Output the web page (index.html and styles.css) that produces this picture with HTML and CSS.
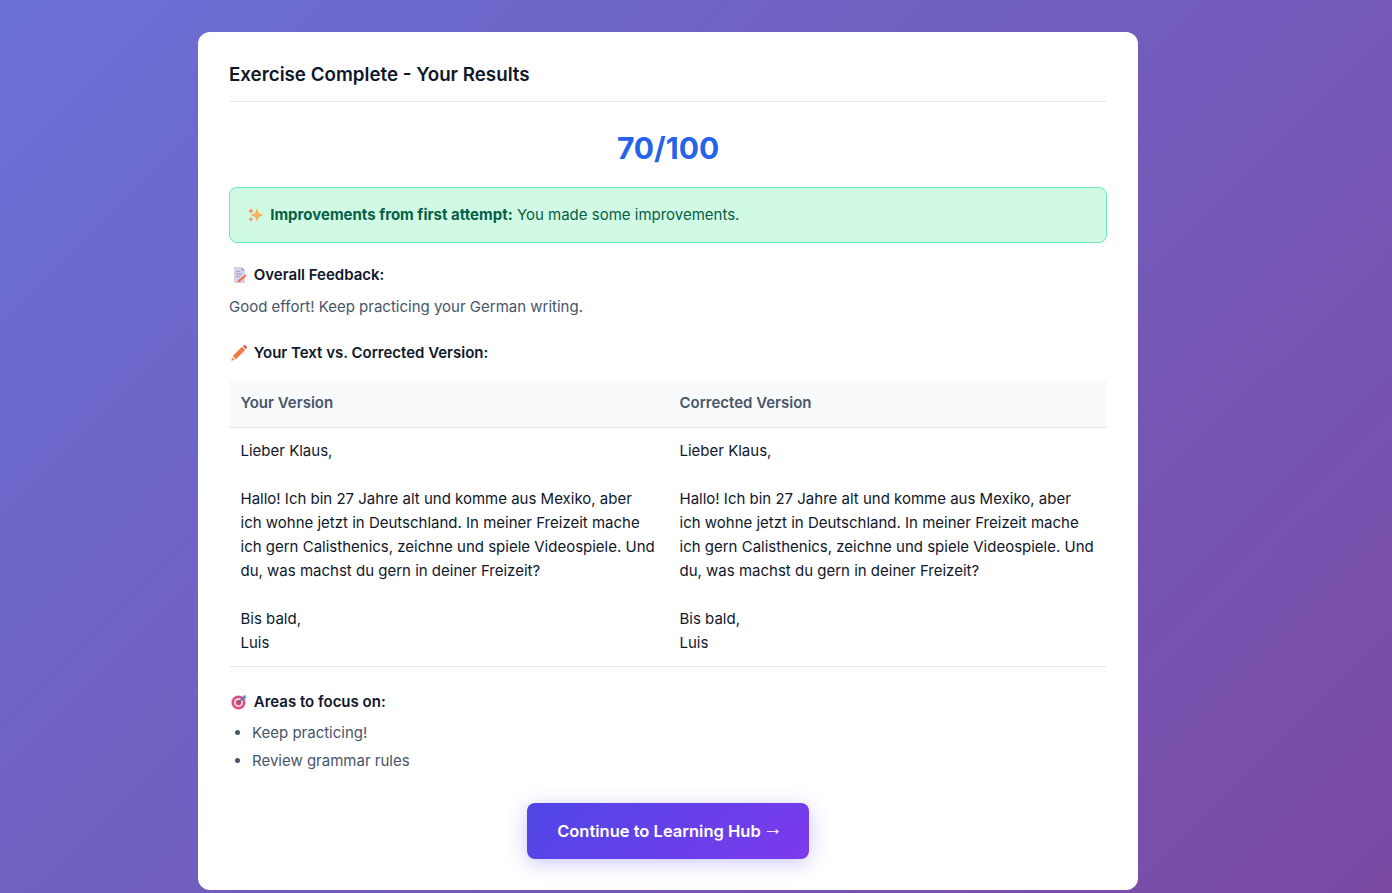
FILE: index.html
```html
<!DOCTYPE html>
<html lang="en">
<head>
  <meta charset="UTF-8">
  <title>Exercise Complete</title>
  <link rel="stylesheet" href="styles.css">
</head>
<body>
<div class="card">
  <h2 class="card-title">Exercise Complete - Your Results</h2>
  <div class="score">70/100</div>

  <div class="improved">
    <svg class="emoji" viewBox="0 0 16 16"><path fill="#f8b35a" d="M10 1 11.800 6 16.500 8l-4.700 2L10 15 8.200 10 3.500 8l4.700-2z"/><path fill="#f28f62" d="M4 1l.9 2.100L7 4l-2.100.9L4 7l-.9-2.100L1 4l2.100-.9zM4 9.500l.8 2 2 .8-2 .8-.8 2-.8-2-2-.8 2-.8z"/></svg>
    <strong>Improvements from first attempt:</strong> You made some improvements.
  </div>

  <h4 class="sub-head">
    <svg class="emoji" viewBox="0 0 16 16"><path fill="#d8d0e6" d="M3 0h7.500L14 3.500V16H3z"/><path fill="#a89cc2" d="M10.500 0 14 3.500h-3.500zM5 4h4v1H5zM5 6.500h6v1H5zM5 9h4v1H5z"/><path fill="#f0733a" d="M14.600 7.400l1.200 1.200-6.600 6-2.700.9.800-2.500z"/></svg>
    Overall Feedback:
  </h4>
  <p class="feedback">Good effort! Keep practicing your German writing.</p>

  <h4 class="sub-head head-compare">
    <svg class="emoji" viewBox="0 0 16 16"><path fill="#ee7b43" d="M11 1.800 14.200 5 5 14.200 1.800 11z"/><path fill="#e4573f" d="M11.800 1 13 .2c.5-.3 1-.2 1.400.2l1.200 1.200c.4.400.5.9.2 1.400L15 4.200z"/><path fill="#f7c7a0" d="M1.800 11 5 14.200.6 15.400z"/><path fill="#7b4a38" d="M1 13.700 2.300 15 .4 15.600z"/></svg>
    Your Text vs. Corrected Version:
  </h4>
  <table class="compare">
    <tr>
      <th>Your Version</th>
      <th>Corrected Version</th>
    </tr>
    <tr>
      <td>Lieber Klaus,

Hallo! Ich bin 27 Jahre alt und komme aus Mexiko, aber ich wohne jetzt in Deutschland. In meiner Freizeit mache ich gern Calisthenics, zeichne und spiele Videospiele. Und du, was machst du gern in deiner Freizeit?

Bis bald,
Luis</td>
      <td>Lieber Klaus,

Hallo! Ich bin 27 Jahre alt und komme aus Mexiko, aber ich wohne jetzt in Deutschland. In meiner Freizeit mache ich gern Calisthenics, zeichne und spiele Videospiele. Und du, was machst du gern in deiner Freizeit?

Bis bald,
Luis</td>
    </tr>
  </table>

  <h4 class="sub-head head-focus">
    <svg class="emoji" viewBox="0 0 16 16"><circle cx="7.500" cy="8.500" r="7" fill="#dc4f80"/><circle cx="7.500" cy="8.500" r="4.600" fill="#f6cbd9"/><circle cx="7.500" cy="8.500" r="2.600" fill="#d0426f"/><path stroke="#3f6fb5" stroke-width="1.200" d="M7.500 8.500 13 3"/><path fill="#4f93dc" d="M12 1l1 1 2-1-.5 2 1.500 1-2.700.8-1.600-1.600z"/></svg>
    Areas to focus on:
  </h4>
  <ul class="focus-list">
    <li>Keep practicing!</li>
    <li>Review grammar rules</li>
  </ul>

  <div class="actions">
    <button class="continue-btn">Continue to Learning Hub <span class="arrow">→</span></button>
  </div>
</div>
</body>
</html>
```

FILE: styles.css
```css
*{
  margin: 0;
  padding: 0;
  box-sizing: border-box;
}
html, body{
  height: 100%;
}
body{
  font-family: Inter, "Liberation Sans", sans-serif;
  background: linear-gradient(135deg, #6a70d6 0%, #7a4aa4 100%);
  padding: 32px 56px 0 0;
  overflow: hidden;
}
.card{
  width: 940px;
  height: 858px;
  margin: 0 auto;
  padding: 31px;
  background: #fff;
  border-radius: 12px;
  color: #0f172a;
}
.card-title{
  font-size: 18.750px;
  line-height: 22px;
  font-weight: 600;
  padding-top: 1px;
  padding-bottom: 15px;
  border-bottom: 1px solid #e5e7eb;
}
.score{
  margin-top: 26px;
  font-size: 30px;
  line-height: 40px;
  font-weight: 700;
  color: #2563eb;
  text-align: center;
}
.improved{
  margin-top: 19px;
  height: 56px;
  padding: 0 17px;
  line-height: 54px;
  font-size: 15px;
  color: #065f46;
  background: #d1fae5;
  border: 1px solid #6ee7b7;
  border-radius: 8px;
}
.emoji{
  width: 16px;
  height: 16px;
  vertical-align: -3px;
  margin-right: 3px;
}
.sub-head{
  margin-top: 23px;
  font-size: 15px;
  line-height: 18px;
  font-weight: 600;
  padding-left: 2px;
}
.feedback{
  margin-top: 13px;
  font-size: 15px;
  line-height: 20px;
  color: #475569;
}
.head-compare{
  margin-top: 27px;
}
.compare{
  width: 100%;
  margin-top: 18px;
  border-collapse: collapse;
  table-layout: fixed;
  font-size: 15px;
}
.compare th{
  height: 47px;
  padding: 0 11.500px 2px;
  text-align: left;
  font-weight: 600;
  color: #475569;
  background: #f9fafb;
  border-bottom: 1px solid #e5e7eb;
}
.compare td{
  padding: 11px 11.500px;
  line-height: 24px;
  white-space: pre-wrap;
  vertical-align: top;
  border-bottom: 1px solid #e5e7eb;
}
.head-focus{
  margin-top: 26px;
}
.focus-list{
  margin-top: 12px;
  padding-left: 23px;
  font-size: 15px;
  color: #475569;
}
.focus-list li{
  line-height: 20px;
  margin-bottom: 8px;
}
.actions{
  margin-top: 32px;
  text-align: center;
}
.continue-btn{
  width: 282px;
  height: 56px;
  padding-left: 4px;
  border: 0;
  border-radius: 8px;
  font-family: inherit;
  font-size: 16.500px;
  font-weight: 600;
  color: #fff;
  background: linear-gradient(135deg, #4f46e5, #7c3aed);
  box-shadow: 0 4px 20px rgba(79, 70, 229, 0.3);
}
.arrow{
  margin-left: -2px;
  font-family: "Liberation Sans", sans-serif;
  font-size: 20px;
  line-height: 16px;
  font-weight: 400;
  vertical-align: 2px;
}
```
